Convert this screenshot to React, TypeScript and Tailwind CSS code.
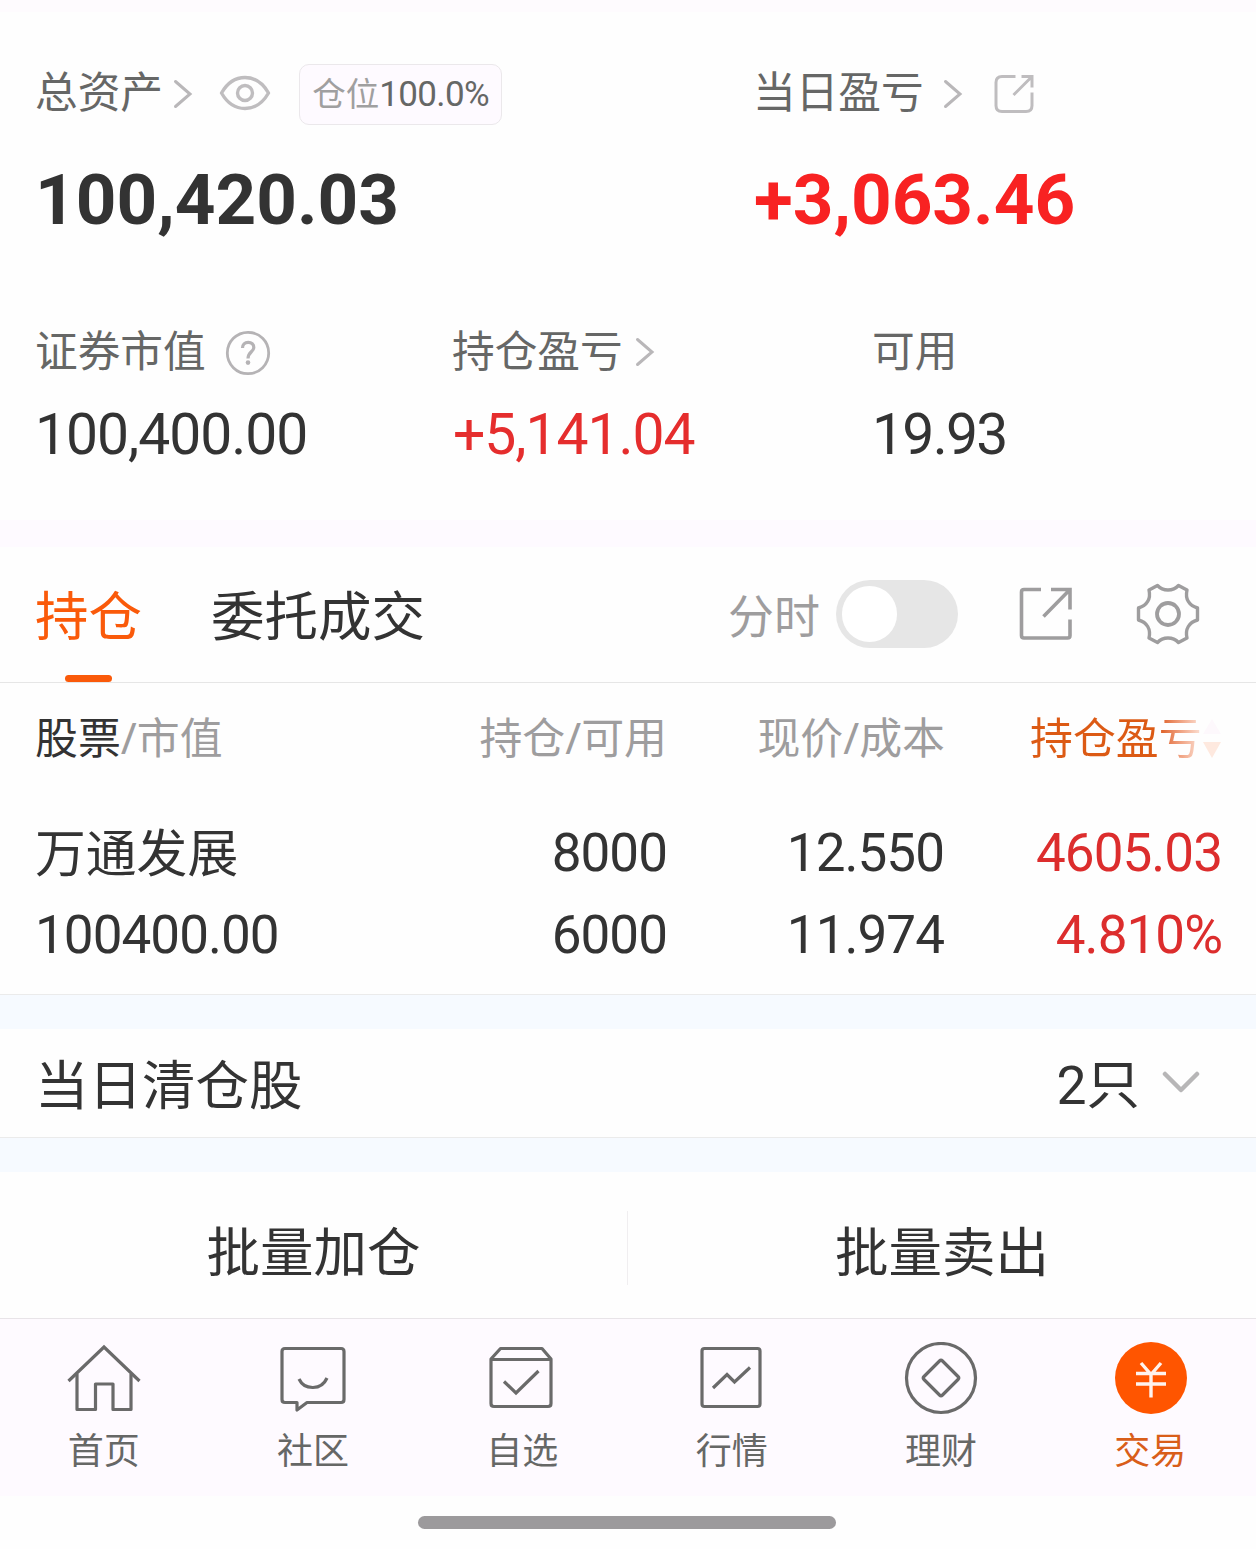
import type { ReactNode } from "react";

const digits = "font-[Roboto,sans-serif] tracking-[-0.018em]";

function ChevronRight() {
  return (
    <svg width="20" height="30" viewBox="0 0 20 30" fill="none" stroke="#b9b7b9" strokeWidth="3" strokeLinecap="round">
      <path d="M2.5 2.5 17 15 2.5 27.5" />
    </svg>
  );
}

function EyeIcon() {
  return (
    <svg width="52" height="36" viewBox="0 0 52 36" fill="none" stroke="#bfbdbf" strokeWidth="3.4" strokeLinejoin="round">
      <path d="M2.5 18C8.5 7.5 17 2.5 26 2.5S43.5 7.5 49.5 18C43.5 28.5 35 33.5 26 33.5S8.5 28.5 2.5 18Z" />
      <circle cx="26" cy="18" r="7.5" />
    </svg>
  );
}

function HelpIcon() {
  return (
    <svg width="46" height="46" viewBox="0 0 46 46" fill="none" stroke="#b5b3b5" strokeWidth="2.8">
      <circle cx="23" cy="23" r="20.7" />
      <path d="M17.5 18C17.5 14.5 19.8 12.3 23.2 12.3S28.8 14.5 28.8 17.5C28.8 21.8 23 22 23 28.5" strokeWidth="3.2" />
      <circle cx="23" cy="32.6" r="2.3" fill="#b5b3b5" stroke="none" />
    </svg>
  );
}

function ShareSmallIcon() {
  return (
    <svg width="40" height="40" viewBox="0 0 40 40" fill="none" stroke="#bfbdbf" strokeWidth="3">
      <path d="M21.5 2.5H8Q2 2.5 2 8.5V31.5Q2 37.5 8 37.5H32Q38 37.5 38 31.5V18.5" />
      <path d="M27.5 2.5H38V13.5M37.5 3 19.5 21" />
    </svg>
  );
}

function ShareIcon() {
  return (
    <svg width="54" height="54" viewBox="0 0 54 54" fill="none" stroke="#9e9d9e" strokeWidth="3.6">
      <path d="M22 2.5H5Q2.5 2.5 2.5 5V48.5Q2.5 51 5 51H48.5Q51 51 51 48.5V32.5" />
      <path d="M32 2.5H51V22.5M50.5 3 24.5 29.5" />
    </svg>
  );
}

function GearIcon() {
  return (
    <svg width="64" height="62" viewBox="0 0 64 62" fill="none" stroke="#9e9d9e" strokeWidth="3.4" strokeLinejoin="round">
      <path d="M21.5 2.5C27 8.5 37 8.5 42.5 2.5L51 7C49 16 53 22.5 61.5 25V37C53 39.5 49 46 51 55L42.5 59.5C37 53.5 27 53.5 21.5 59.5L13 55C15 46 11 39.5 2.5 37V25C11 22.5 15 16 13 7Z" />
      <circle cx="32" cy="31" r="11" strokeWidth="3.8" />
    </svg>
  );
}

function NavSvg({ children }: { children: ReactNode }) {
  return (
    <svg width="76" height="76" viewBox="0 0 76 76" fill="none" stroke="#6a6a6a" strokeWidth="3.2" strokeLinejoin="round">
      {children}
    </svg>
  );
}

const navItems = [
  {
    label: "首页",
    icon: (
      <NavSvg>
        <path d="M2.5 39 38 5 73.5 39" strokeLinejoin="miter" />
        <path d="M11 32V67.5H29.5V42H47V67.5H65V32" />
      </NavSvg>
    ),
  },
  {
    label: "社区",
    icon: (
      <NavSvg>
        <path d="M10 6.500H66Q69 6.500 69 9.500V57.500Q69 60.500 66 60.500H32L22 68V60.500H10Q7 60.500 7 57.500V9.500Q7 6.500 10 6.500Z" />
        <path d="M24 37C29.500 48.500 46.500 48.500 52 36" />
      </NavSvg>
    ),
  },
  {
    label: "自选",
    icon: (
      <NavSvg>
        <path d="M7 17 16.500 6.500H58L67 17V61.500Q67 64.500 64 64.500H10Q7 64.500 7 61.500ZM7 17.500H67" />
        <path d="M20 39.500 32 51 54.500 29" strokeLinejoin="miter" />
      </NavSvg>
    ),
  },
  {
    label: "行情",
    icon: (
      <NavSvg>
        <rect x="8" y="6.500" width="58" height="58" rx="2.500" />
        <path d="M19 46 33 32.500 40.500 40 56 25.500" strokeLinejoin="miter" />
      </NavSvg>
    ),
  },
  {
    label: "理财",
    icon: (
      <NavSvg>
        <circle cx="38" cy="36" r="34.500" />
        <path d="M39.500 19 55 34.500Q56.500 36 55 37.500L39.500 53Q38 54.500 36.500 53L21 37.500Q19.500 36 21 34.500L36.500 19Q38 17.500 39.500 19Z" />
      </NavSvg>
    ),
  },
  {
    label: "交易",
    active: true,
    icon: (
      <svg width="76" height="76" viewBox="0 0 76 76" fill="none" stroke="#fff3ee" strokeWidth="3.4" className="ml-[2px]">
        <circle cx="38" cy="36" r="36" fill="#ff5500" stroke="none" />
        <path d="M28 21 38 32.500 48 21M38 32V55.500M23 31.500H53M23 42H53" />
      </svg>
    ),
  },
];

export default function App() {
  return (
    <div className="flex h-[1549px] w-[1256px] flex-col overflow-hidden bg-[#fefefe] font-['Noto_Sans','Noto_Sans_CJK_SC',sans-serif] text-[#333333]">
      <div className="h-3 shrink-0 bg-[#fefbfe]" />

      {/* 资产概览 */}
      <section className="h-[508px] shrink-0 pl-[35px]">
        <div className="flex pt-[48px]">
          <div className="w-[718px]">
            <div className="flex h-[68px] items-center text-[#666766]">
              <span className="pb-[5px] text-[42.7px] leading-[64px]">总资产</span>
              <span className="ml-[10px]"><ChevronRight /></span>
              <span className="ml-[26px] pb-[3px]"><EyeIcon /></span>
              <span className="ml-[28px] flex h-[61px] w-[203px] items-center justify-center rounded-[10px] border border-[#ebe8eb] bg-[#fefaff] text-[33.5px] leading-none whitespace-nowrap">
                <span className="text-[#a09fa0]">仓位</span>
                <span className={`text-[35px] ${digits}`}>100.0%</span>
              </span>
            </div>
            <div className="mt-[26px] font-[Roboto,sans-serif] text-[71px] leading-[92px] font-bold">100,420.03</div>
          </div>
          <div>
            <div className="flex h-[68px] items-center text-[#666766]">
              <span className="pb-[5px] text-[42.7px] leading-[64px]">当日盈亏</span>
              <span className="ml-[19px]"><ChevronRight /></span>
              <span className="ml-[31px]"><ShareSmallIcon /></span>
            </div>
            <div className="mt-[26px] pl-px font-[Roboto,sans-serif] text-[71px] leading-[92px] font-bold text-[#f82222]">+3,063.46</div>
          </div>
        </div>

        <div className="flex pt-[72px]">
          <div className="w-[417px]">
            <div className="flex h-[68px] items-center text-[42.7px] leading-[64px] text-[#666766]">
              <span className="pb-[3px]">证券市值</span>
              <span className="ml-[19px] pt-px"><HelpIcon /></span>
            </div>
            <div className={`mt-[11px] text-[57px] leading-[76px] ${digits}`}>100,400.00</div>
          </div>
          <div className="w-[420px]">
            <div className="flex h-[68px] items-center text-[42.7px] leading-[64px] text-[#666766]">
              <span className="pb-[3px]">持仓盈亏</span>
              <span className="ml-[12px]"><ChevronRight /></span>
            </div>
            <div className={`mt-[11px] pl-px text-[57px] leading-[76px] text-[#e52d2d] ${digits}`}>+5,141.04</div>
          </div>
          <div>
            <div className="flex h-[68px] items-center text-[42.7px] leading-[64px] text-[#666766]">
              <span className="pb-[3px]">可用</span>
            </div>
            <div className="mt-[11px] font-[Roboto,sans-serif] text-[57px] leading-[76px] tracking-[-0.03em]">19.93</div>
          </div>
        </div>
      </section>

      <div className="h-[27px] shrink-0 bg-[#fefaff]" />

      {/* 标签栏 */}
      <div className="flex h-[136px] shrink-0 items-center border-b border-[#e6e6e6] pb-[2px] pl-[35px] text-[53.5px] leading-[80px]">
        <div className="relative pt-[4px] text-[#fa5a0a]">
          持仓
          <span className="absolute -bottom-[26px] left-[30px] h-[7px] w-[47px] rounded-full bg-[#fa5a0a]" />
        </div>
        <div className="ml-[69px] pt-[4px]">委托成交</div>
        <div className="ml-[303px] pt-[2px] text-[46px] text-[#9e9d9e]">分时</div>
        <div className="ml-[16px] h-[68px] w-[122px] rounded-full bg-[#e6e6e6] py-[6px] pl-[6px]">
          <div className="h-[56px] w-[55px] rounded-full bg-white" />
        </div>
        <span className="ml-[61px]"><ShareIcon /></span>
        <span className="ml-[63px]"><GearIcon /></span>
      </div>

      {/* 持仓列表 */}
      <div className="flex h-[312px] shrink-0 flex-col border-b border-[#ebebeb] pl-[35px]">
        <div className="flex h-[110px] items-center text-[42.9px] leading-[64px] text-[#9e9d9e]">
          <div className="w-[353px]"><span className="text-[#333333]">股票</span>/市值</div>
          <div className="w-[279px] text-right">持仓/可用</div>
          <div className="w-[278px] text-right">现价/成本</div>
          <div className="ml-[85px] flex items-center">
            <span className="bg-linear-to-r from-[#dc5a14] from-75% to-[#fbe3d8] bg-clip-text text-transparent">持仓盈亏</span>
            <svg width="18" height="42" viewBox="0 0 18 42" className="ml-px">
              <path d="M0 17 9 2 18 17Z" fill="#fdf8fc" />
              <path d="M0 25H18L9 41Z" fill="#fee9df" />
            </svg>
          </div>
        </div>
        <div className="mt-[19px] flex h-[82px] items-center text-[53px] leading-[80px]">
          <div className="w-[353px] text-[50.8px]">万通发展</div>
          <div className={`w-[279px] text-right ${digits}`}>8000</div>
          <div className={`w-[277px] text-right ${digits}`}>12.550</div>
          <div className={`w-[278px] text-right text-[#dc2d2d] ${digits}`}>4605.03</div>
        </div>
        <div className="flex h-[82px] items-center text-[53px] leading-[80px]">
          <div className={`w-[353px] ${digits}`}>100400.00</div>
          <div className={`w-[279px] text-right ${digits}`}>6000</div>
          <div className={`w-[277px] text-right ${digits}`}>11.974</div>
          <div className={`w-[278px] text-right text-[#dc2d2d] ${digits}`}>4.810%</div>
        </div>
      </div>

      <div className="h-[34px] shrink-0 bg-[#f6faff]" />

      <div className="flex h-[109px] shrink-0 items-center border-b border-[#ebebeb] pr-[56px] pl-[35px] text-[53.5px] leading-[80px]">
        <div className="grow pt-[3px]">当日清仓股</div>
        <div className="pt-[3px]">
          <span className="font-[Roboto,sans-serif]">2</span>只
        </div>
        <svg width="38" height="24" viewBox="0 0 38 24" fill="none" stroke="#b7b6b7" strokeWidth="4.5" strokeLinecap="round" strokeLinejoin="round" className="ml-[22px]">
          <path d="M3 3 19 19 35 3" />
        </svg>
      </div>

      <div className="h-[34px] shrink-0 bg-[#f6faff]" />

      {/* 批量操作 */}
      <div className="flex h-[147px] shrink-0 items-center border-b border-[#e8e4e8] text-center text-[53.5px] leading-[80px]">
        <div className="w-[627px] pt-[13px]">批量加仓</div>
        <div className="mt-[6px] h-[74px] w-px bg-[#f0eef0]" />
        <div className="w-[628px] pt-[13px]">批量卖出</div>
      </div>

      {/* 底部导航 */}
      <nav className="flex h-[177px] shrink-0 bg-[#fefaff] pt-[23px]">
        {navItems.map((item) => (
          <div key={item.label} className="flex w-[209.4px] flex-col items-center pr-[2px]">
            {item.icon}
            <span className={`mt-[6px] text-[36px] leading-[54px] ${item.active ? "text-[#d95e1a]" : "text-[#666766]"}`}>
              {item.label}
            </span>
          </div>
        ))}
      </nav>

      <div className="flex grow items-center justify-center bg-[#fefefe] pr-[2px]">
        <div className="h-[13px] w-[418px] rounded-full bg-[#9c9a9c]" />
      </div>
    </div>
  );
}
